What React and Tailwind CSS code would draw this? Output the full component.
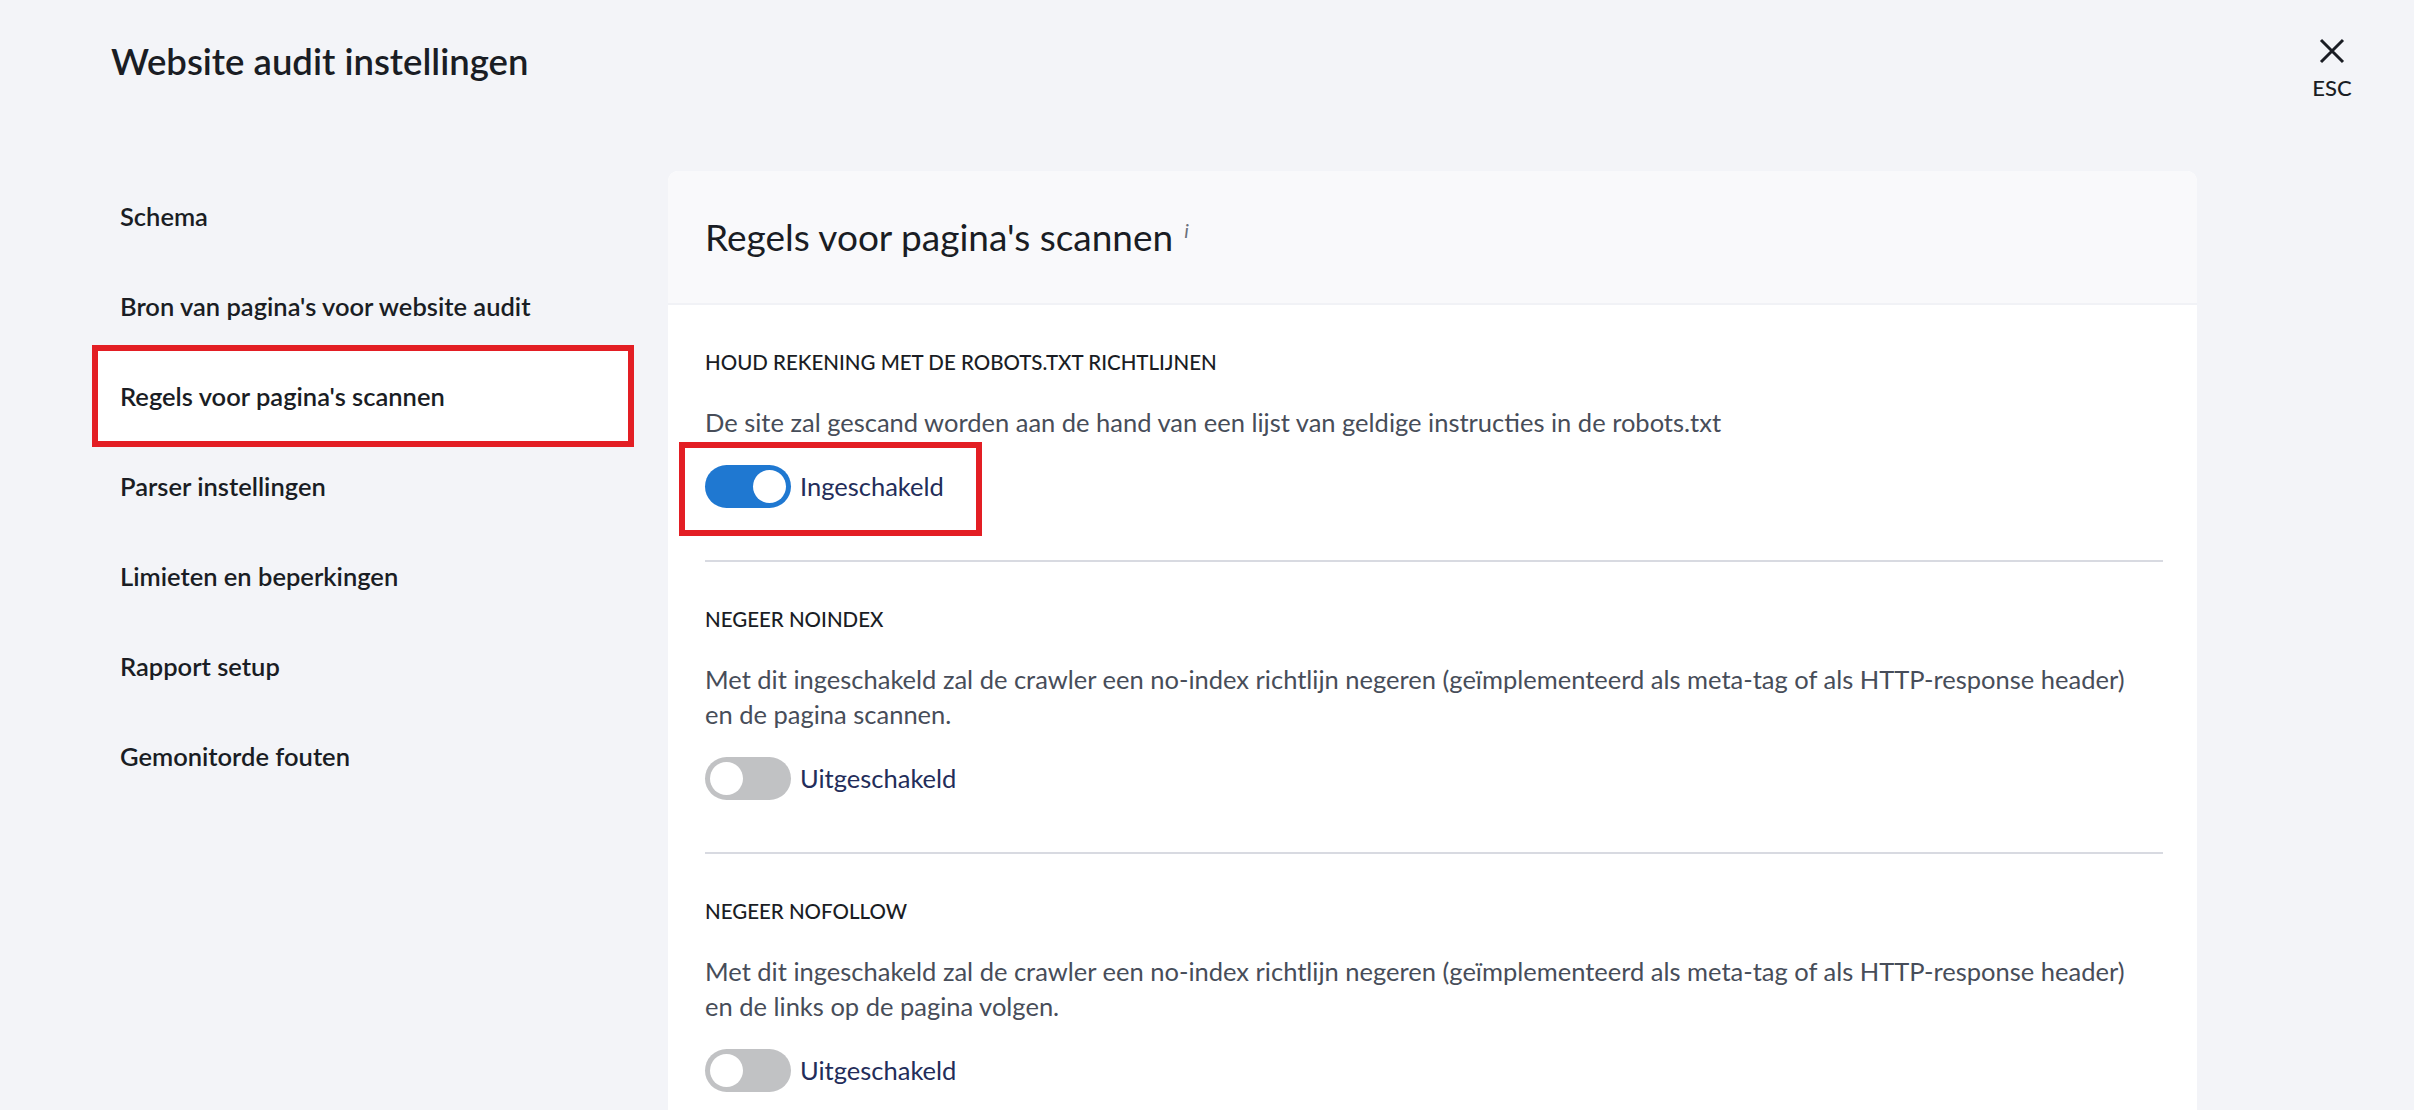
import React from "react";

const navItems = [
  "Schema",
  "Bron van pagina's voor website audit",
  "Regels voor pagina's scannen",
  "Parser instellingen",
  "Limieten en beperkingen",
  "Rapport setup",
  "Gemonitorde fouten",
];

function Toggle({ on }) {
  return (
    <div
      className={
        "w-[86px] h-[43px] rounded-full flex items-center px-[5px] shrink-0 " +
        (on ? "bg-[#1f78d1] justify-end" : "bg-[#c1c2c4] justify-start")
      }
    >
      <div className="w-[33px] h-[33px] rounded-full bg-white" />
    </div>
  );
}

function Section({ title, desc, on, highlight, last }) {
  return (
    <div className={"pt-[45px] pb-[52px] " + (last ? "" : "border-b-2 border-[#d8dae1]")}>
      <div className="text-[20.5px] leading-[24px] font-medium text-[#1a1d24]">{title}</div>
      <div className="mt-[31px] text-[25.5px] leading-[35px] text-[#474d59]">{desc}</div>
      <div className="mt-[25px] relative flex items-center">
        <Toggle on={on} />
        <span className="ml-[9px] text-[25.5px] text-[#232d5a]">{on ? "Ingeschakeld" : "Uitgeschakeld"}</span>
        {highlight && (
          <div className="absolute left-[-26px] top-[-23px] w-[303px] h-[94px] border-[6px] border-[#e31e24] pointer-events-none" />
        )}
      </div>
    </div>
  );
}

export default function App() {
  return (
    <div
      className="w-full h-[1110px] bg-[#f3f4f8] overflow-hidden"
      style={{ fontFamily: "Lato, 'Noto Sans', sans-serif" }}
    >
      <div className="flex items-start justify-between pl-[111px] pr-[52px] pt-[39px]">
        <h1 className="text-[36.5px] leading-[44px] font-semibold text-[#1a1d24]">Website audit instellingen</h1>
        <div className="flex flex-col items-center w-[60px]">
          <svg width="26" height="26" viewBox="0 0 26 26" className="mt-[-1px]">
            <path d="M2 2 L24 24 M24 2 L2 24" stroke="#1a1d24" strokeWidth="3" strokeLinecap="butt" />
          </svg>
          <span className="mt-[12px] text-[22px] leading-[24px] font-medium text-[#1a1d24]">ESC</span>
        </div>
      </div>

      <div className="flex mt-[71px]">
        <nav className="pl-[98px] w-[628px] shrink-0 flex flex-col">
          {navItems.map((item, i) => (
            <div
              key={item}
              className={
                "h-[90px] flex items-center pl-[22px] text-[25.5px] font-semibold text-[#1a1d24] " +
                (i === 2 ? "bg-white outline-[6px] outline-solid outline-[#e31e24]" : "")
              }
            >
              {item}
            </div>
          ))}
        </nav>

        <div className="ml-[40px] w-[1529px] shrink-0 bg-white rounded-t-[10px] min-h-[1000px]">
          <div className="h-[134px] bg-[#f9f9fb] rounded-t-[10px] border-b-2 border-[#f1f2f6] flex items-center pl-[37px]">
            <span className="text-[37px] text-[#1a1d24]">Regels voor pagina's scannen</span>
            <span className="ml-[11px] self-start mt-[44px] text-[20px] italic text-[#6b717c]">i</span>
          </div>
          <div className="pl-[37px] pr-[34px]">
            <Section
              title="HOUD REKENING MET DE ROBOTS.TXT RICHTLIJNEN"
              desc="De site zal gescand worden aan de hand van een lijst van geldige instructies in de robots.txt"
              on={true}
              highlight
            />
            <Section
              title="NEGEER NOINDEX"
              desc={<>Met dit ingeschakeld zal de crawler een no-index richtlijn negeren (geïmplementeerd als meta-tag of als HTTP-response header)<br />en de pagina scannen.</>}
              on={false}
            />
            <Section
              title="NEGEER NOFOLLOW"
              desc={<>Met dit ingeschakeld zal de crawler een no-index richtlijn negeren (geïmplementeerd als meta-tag of als HTTP-response header)<br />en de links op de pagina volgen.</>}
              on={false}
              last
            />
          </div>
        </div>
      </div>
    </div>
  );
}
